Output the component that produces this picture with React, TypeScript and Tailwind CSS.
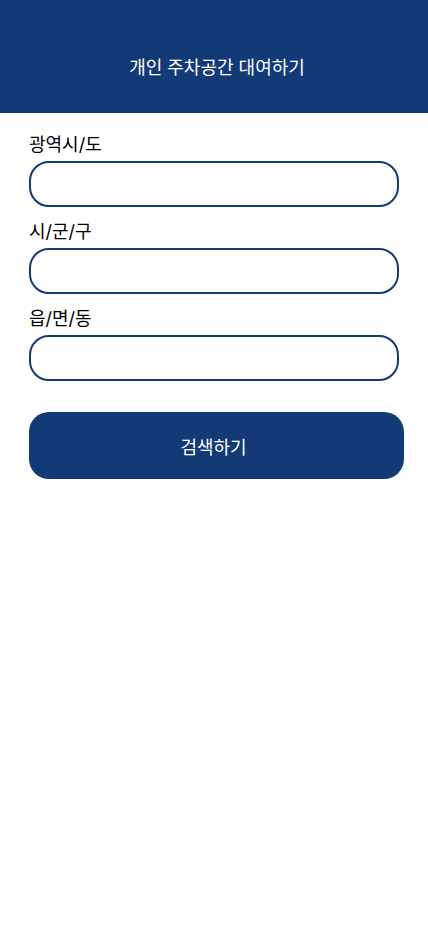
const fields = [
  { id: "province", label: "광역시/도" },
  { id: "city", label: "시/군/구" },
  { id: "town", label: "읍/면/동" },
];

export default function App() {
  return (
    <div className="min-h-screen bg-white font-['Inter','Noto_Sans_CJK_KR',sans-serif] text-lg text-black">
      <header className="flex h-[113px] items-center justify-center bg-[#123a77] pt-[22px] pl-1.5 text-white">
        <h1>개인 주차공간 대여하기</h1>
      </header>
      <form className="pt-[18px] pr-6 pl-[29px]" onSubmit={(e) => e.preventDefault()}>
        <div className="flex flex-col gap-[11px] pr-[5px]">
          {fields.map((f) => (
            <div key={f.id} className="flex flex-col gap-[3px]">
              <label htmlFor={f.id} className="leading-[27px]">{f.label}</label>
              <input
                id={f.id}
                type="text"
                className="h-[46px] w-full rounded-[20px] border-2 border-[#123a77] bg-white px-4 outline-none"
              />
            </div>
          ))}
        </div>
        <button type="submit" className="mt-[31px] h-[67px] w-full rounded-[20px] bg-[#123a77] pt-1 pr-1.5 text-white">
          검색하기
        </button>
      </form>
    </div>
  );
}
